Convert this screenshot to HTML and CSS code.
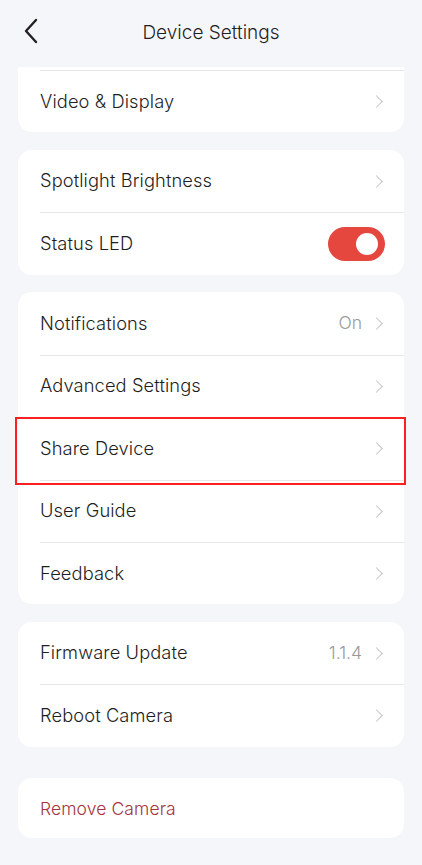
FILE: index.html
```html
<!DOCTYPE html>
<html lang="en">
<head>
    <meta charset="UTF-8">
    <meta name="viewport" content="width=device-width, initial-scale=1.0">
    <title>Device Settings</title>
    <link rel="stylesheet" href="styles.css">
</head>
<body>
    <header class="top-bar">
        <button class="back-btn" aria-label="Back">
            <svg width="16" height="26" viewBox="0 0 16 26">
                <path d="M13 2 L3 13 L13 24" fill="none" stroke="#222" stroke-width="2.4" stroke-linecap="round" stroke-linejoin="round"/>
            </svg>
        </button>
        <h1>Device Settings</h1>
    </header>

    <main class="settings">
        <!-- nhóm đầu bị cuộn lên dưới thanh tiêu đề -->
        <section class="card card-scrolled">
            <div class="row">
                <span class="label">Video &amp; Display</span>
                <span class="chevron"></span>
            </div>
        </section>

        <section class="card">
            <div class="row">
                <span class="label">Spotlight Brightness</span>
                <span class="chevron"></span>
            </div>
            <div class="row">
                <span class="label">Status LED</span>
                <label class="switch">
                    <input type="checkbox" checked>
                    <span class="slider"></span>
                </label>
            </div>
        </section>

        <section class="card">
            <div class="row">
                <span class="label">Notifications</span>
                <span class="value">On</span>
                <span class="chevron"></span>
            </div>
            <div class="row">
                <span class="label">Advanced Settings</span>
                <span class="chevron"></span>
            </div>
            <div class="row row-marked">
                <span class="label">Share Device</span>
                <span class="chevron"></span>
            </div>
            <div class="row">
                <span class="label">User Guide</span>
                <span class="chevron"></span>
            </div>
            <div class="row">
                <span class="label">Feedback</span>
                <span class="chevron"></span>
            </div>
        </section>

        <section class="card">
            <div class="row">
                <span class="label">Firmware Update</span>
                <span class="value">1.1.4</span>
                <span class="chevron"></span>
            </div>
            <div class="row">
                <span class="label">Reboot Camera</span>
                <span class="chevron"></span>
            </div>
        </section>

        <section class="card card-danger">
            <div class="row row-danger">
                <span class="label">Remove Camera</span>
            </div>
        </section>
    </main>
</body>
</html>
```

FILE: styles.css
```css
/* Reset mặc định */
* {
    margin: 0;
    padding: 0;
    box-sizing: border-box;
}

body {
    font-family: Inter, "Noto Sans", sans-serif;
    font-weight: 300;
    background-color: #f5f6fa;
    color: #1f1f1f;
    width: 422px;
    height: 865px;
    overflow: hidden;
}

.top-bar {
    height: 67px;
    display: flex;
    align-items: center;
    justify-content: center;
    position: relative;
}

.top-bar h1 {
    font-size: 19px;
    font-weight: 300;
    color: #1f1f1f;
    margin-top: -3px;
}

.back-btn {
    position: absolute;
    left: 23px;
    top: 18px;
    background: none;
    border: none;
    cursor: pointer;
}

.settings {
    padding: 0 18px;
    display: flex;
    flex-direction: column;
    gap: 17.6px;
}

.card {
    background-color: white;
    border-radius: 14px;
    padding-left: 22px;
}

.card-scrolled {
    border-radius: 0 0 14px 14px;
    padding-top: 3px;
}

.card-scrolled .row {
    border-top: 1px solid #e6e6e6;
}

.card-danger {
    margin-top: 13.6px;
}

.row {
    height: 62.4px;
    display: flex;
    align-items: center;
    padding-right: 20px;
    position: relative;
}

.row + .row {
    border-top: 1px solid #e8e8e8;
}

.label {
    flex: 1;
    font-size: 18.3px;
    letter-spacing: 0.1px;
    margin-top: -2px;
}

.value {
    font-size: 17.5px;
    color: #9a9a9a;
    margin-right: 10px;
    margin-top: -2px;
}

.chevron {
    width: 9px;
    height: 9px;
    border-top: 1.5px solid #c4c4c4;
    border-right: 1.5px solid #c4c4c4;
    transform: rotate(45deg);
    margin-right: 3px;
}

/* khung đỏ đánh dấu mục chia sẻ */
.row-marked::after {
    content: "";
    position: absolute;
    left: -25px;
    right: -2px;
    top: -1px;
    bottom: -5px;
    border: 2px solid #fc2121;
}

.row-danger {
    height: 60px;
}

.row-danger .label {
    color: #a6333d;
    font-size: 17.5px;
    margin-top: 1px;
}

.switch {
    position: relative;
    width: 57px;
    height: 34px;
    margin-right: -1px;
}

.switch input {
    display: none;
}

.slider {
    position: absolute;
    inset: 0;
    background-color: #e5473f;
    border-radius: 17px;
}

.slider::before {
    content: "";
    position: absolute;
    width: 22px;
    height: 22px;
    top: 6px;
    right: 7px;
    background-color: white;
    border-radius: 50%;
}
```
